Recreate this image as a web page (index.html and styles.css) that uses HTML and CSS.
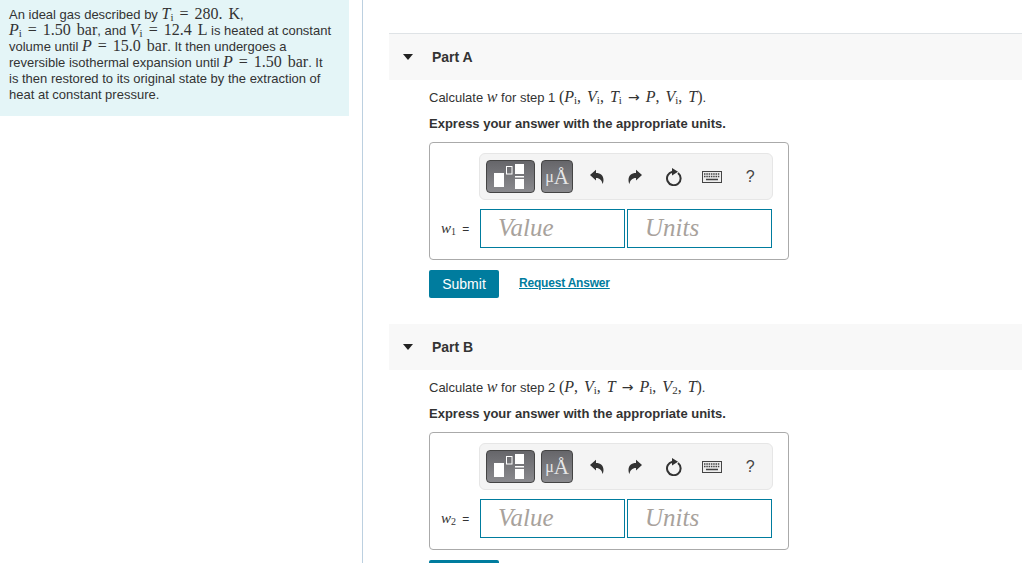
FILE: index.html
```html
<!DOCTYPE html>
<html lang="en">
<head>
    <meta charset="UTF-8">
    <meta name="viewport" content="width=device-width, initial-scale=1.0">
    <title>Ideal gas cycle</title>
    <link rel="stylesheet" href="styles.css">
</head>
<body>
    <div class="layout">
        <div class="intro-pane">
            <div class="intro">
                An ideal gas described by <span class="m"><i>T</i><sub>i</sub> = 280. K</span>,<br>
                <span class="m"><i>P</i><sub>i</sub> = 1.50 bar</span>, and <span class="m"><i>V</i><sub>i</sub> = 12.4 L</span> is heated at constant<br>
                volume until <span class="m"><i>P</i> = 15.0 bar</span>. It then undergoes a<br>
                reversible isothermal expansion until <span class="m"><i>P</i> = 1.50 bar</span>. It<br>
                is then restored to its original state by the extraction of<br>
                heat at constant pressure.
            </div>
        </div>

        <div class="parts">
            <div class="part">
                <div class="part-header part-header-first">
                    <span class="caret"></span>
                    <span class="part-title">Part A</span>
                </div>
                <div class="part-body">
                    <p class="question">Calculate <span class="m"><i>w</i></span> for step 1 <span class="m">(<i>P</i><sub>i</sub>, <i>V</i><sub>i</sub>, <i>T</i><sub>i</sub> <span class="arrow">→</span> <i>P</i>, <i>V</i><sub>i</sub>, <i>T</i>)</span>.</p>
                    <p class="instruction">Express your answer with the appropriate units.</p>
                    <div class="answer-box">
                        <div class="toolbar">
                            <button class="tool-btn tool-frac" aria-label="Templates">
                                <svg width="47" height="31" viewBox="0 0 47 31"><rect x="7" y="12" width="10" height="14" fill="#fff"/><rect x="19.500" y="5.500" width="5.500" height="7.500" fill="none" stroke="#fff"/><rect x="28" y="3" width="9" height="10" fill="#fff"/><rect x="28" y="15" width="9" height="1.500" fill="#fff"/><rect x="28" y="18" width="9" height="10" fill="#fff"/></svg>
                            </button>
                            <button class="tool-btn tool-units"><span class="mu">μ</span>Å</button>
                            <span class="tool-icon">
                                <svg width="16" height="16" viewBox="0 0 16 16"><path d="M1 6 7 .8V4c4.500 0 7.500 2.500 7.500 7 0 1.500-.4 3-1 4C13 11.500 10.800 9 7 9v2.500z" fill="#333"/></svg>
                            </span>
                            <span class="tool-icon">
                                <svg width="16" height="16" viewBox="0 0 16 16"><path d="M15 6 9 .8V4C4.500 4 1.500 6.500 1.500 11c0 1.500.4 3 1 4C3 11.500 5.200 9 9 9v2.500z" fill="#333"/></svg>
                            </span>
                            <span class="tool-icon">
                                <svg width="18" height="18" viewBox="0 0 18 18"><path d="M13 5a6.800 6.800 0 1 1-5.500-1.300" fill="none" stroke="#333" stroke-width="2"/><path d="M7 0l6 3.800L7 7.500z" fill="#333"/></svg>
                            </span>
                            <span class="tool-icon">
                                <svg width="20" height="12" viewBox="0 0 20 12"><rect x=".5" y=".5" width="19" height="11" fill="#eee" stroke="#444"/><path d="M2 3h16M2 5.500h16" stroke="#444" stroke-width="1.500" stroke-dasharray="1.500 .8"/><path d="M4 8.500h12" stroke="#444" stroke-width="1.500"/></svg>
                            </span>
                            <span class="tool-icon tool-help">?</span>
                        </div>
                        <div class="answer-row">
                            <label class="answer-label"><span class="m"><i>w</i><sub>1</sub></span> =</label>
                            <div class="fake-input">Value</div>
                            <div class="fake-input">Units</div>
                        </div>
                    </div>
                    <div class="actions">
                        <button class="submit">Submit</button>
                        <a class="request" href="#">Request Answer</a>
                    </div>
                </div>
            </div>

            <div class="part">
                <div class="part-header">
                    <span class="caret"></span>
                    <span class="part-title">Part B</span>
                </div>
                <div class="part-body">
                    <p class="question">Calculate <span class="m"><i>w</i></span> for step 2 <span class="m">(<i>P</i>, <i>V</i><sub>i</sub>, <i>T</i> <span class="arrow">→</span> <i>P</i><sub>i</sub>, <i>V</i><sub>2</sub>, <i>T</i>)</span>.</p>
                    <p class="instruction">Express your answer with the appropriate units.</p>
                    <div class="answer-box">
                        <div class="toolbar">
                            <button class="tool-btn tool-frac" aria-label="Templates">
                                <svg width="47" height="31" viewBox="0 0 47 31"><rect x="7" y="12" width="10" height="14" fill="#fff"/><rect x="19.500" y="5.500" width="5.500" height="7.500" fill="none" stroke="#fff"/><rect x="28" y="3" width="9" height="10" fill="#fff"/><rect x="28" y="15" width="9" height="1.500" fill="#fff"/><rect x="28" y="18" width="9" height="10" fill="#fff"/></svg>
                            </button>
                            <button class="tool-btn tool-units"><span class="mu">μ</span>Å</button>
                            <span class="tool-icon">
                                <svg width="16" height="16" viewBox="0 0 16 16"><path d="M1 6 7 .8V4c4.500 0 7.500 2.500 7.500 7 0 1.500-.4 3-1 4C13 11.500 10.800 9 7 9v2.500z" fill="#333"/></svg>
                            </span>
                            <span class="tool-icon">
                                <svg width="16" height="16" viewBox="0 0 16 16"><path d="M15 6 9 .8V4C4.500 4 1.500 6.500 1.500 11c0 1.500.4 3 1 4C3 11.500 5.200 9 9 9v2.500z" fill="#333"/></svg>
                            </span>
                            <span class="tool-icon">
                                <svg width="18" height="18" viewBox="0 0 18 18"><path d="M13 5a6.800 6.800 0 1 1-5.500-1.300" fill="none" stroke="#333" stroke-width="2"/><path d="M7 0l6 3.800L7 7.500z" fill="#333"/></svg>
                            </span>
                            <span class="tool-icon">
                                <svg width="20" height="12" viewBox="0 0 20 12"><rect x=".5" y=".5" width="19" height="11" fill="#eee" stroke="#444"/><path d="M2 3h16M2 5.500h16" stroke="#444" stroke-width="1.500" stroke-dasharray="1.500 .8"/><path d="M4 8.500h12" stroke="#444" stroke-width="1.500"/></svg>
                            </span>
                            <span class="tool-icon tool-help">?</span>
                        </div>
                        <div class="answer-row">
                            <label class="answer-label"><span class="m"><i>w</i><sub>2</sub></span> =</label>
                            <div class="fake-input">Value</div>
                            <div class="fake-input">Units</div>
                        </div>
                    </div>
                    <div class="actions">
                        <button class="submit">Submit</button>
                        <a class="request" href="#">Request Answer</a>
                    </div>
                </div>
            </div>
        </div>
    </div>
</body>
</html>
```

FILE: styles.css
```css
html, body {
    margin: 0;
    height: 100%;
    overflow: hidden;
}
body {
    font-family: "Liberation Sans", Arial, sans-serif;
    font-size: 13px;
    color: #333;
    background: white;
}
.layout {
    display: flex;
    height: 563px;
}
.intro-pane {
    flex: none;
    width: 362px;
    border-right: 1px solid #bcd0e0;
}
.intro {
    width: 349px;
    height: 116px;
    box-sizing: border-box;
    padding: 7px 9px 0;
    background: #e4f5f7;
    line-height: 16px;
}
.m {
    font-family: "Liberation Serif", "DejaVu Serif", serif;
    font-size: 16px;
    line-height: 0;
    word-spacing: 2px;
}
.m sub {
    font-size: 11px;
    line-height: 0;
    vertical-align: -2px;
}
.arrow {
    font-family: "DejaVu Sans", sans-serif;
    font-size: 14px;
}
.parts {
    flex: 1;
    padding: 33px 0 0 26px;
    min-width: 0;
}
.part {
    height: 290px;
}
.part-header {
    display: flex;
    align-items: center;
    height: 46px;
    background: #f8f8f8;
    background-clip: padding-box;
    border-top: 1px solid transparent;
}
.part-header-first {
    border-top-color: #dfe3e6;
}
.caret {
    width: 0;
    height: 0;
    margin-left: 14px;
    border-left: 5px solid transparent;
    border-right: 5px solid transparent;
    border-top: 6px solid #222;
}
.part-title {
    margin-left: 19px;
    font-size: 14px;
    font-weight: bold;
}
.part-body {
    padding: 9px 0 0 40px;
}
.question {
    margin: 0;
    line-height: 18px;
}
.instruction {
    margin: 8px 0 9px;
    font-weight: bold;
    line-height: 18px;
}
.answer-box {
    width: 358px;
    height: 116px;
    border: 1px solid #aaa;
    border-radius: 4px;
}
.toolbar {
    display: flex;
    align-items: center;
    width: 294px;
    height: 47px;
    margin: 10px 0 0 49px;
    box-sizing: border-box;
    padding-left: 6px;
    background: #f4f4f4;
    border: 1px solid #e6e6e6;
    border-radius: 6px;
}
.tool-btn {
    height: 33px;
    padding: 0;
    display: flex;
    align-items: center;
    justify-content: center;
    border: 1px solid #444;
    border-radius: 4px;
    background: linear-gradient(#66666a, #8a8a8e);
    color: #e6e6e6;
}
.tool-frac {
    width: 49px;
    margin-right: 6px;
}
.tool-units {
    width: 32px;
    margin-right: 5px;
    align-items: flex-end;
    padding-bottom: 5px;
    font-family: "Liberation Serif", serif;
    font-size: 21px;
    line-height: 20px;
}
.mu {
    font-size: 16px;
}
.tool-icon {
    flex: none;
    display: flex;
    align-items: center;
    justify-content: center;
    width: 38.25px;
    color: #444;
}
.tool-help {
    font-size: 16px;
}
.answer-row {
    display: flex;
    align-items: center;
    margin-top: 9px;
}
.answer-label {
    width: 50px;
    box-sizing: border-box;
    padding-left: 11px;
    font-size: 12px;
    word-spacing: 3px;
}
.answer-label .m {
    font-size: 15px;
    word-spacing: 0;
}
.answer-label .m sub {
    font-size: 10px;
}
.fake-input {
    width: 145px;
    height: 39px;
    box-sizing: border-box;
    margin-right: 2px;
    padding-left: 17px;
    border: 1px solid #007c9e;
    font-family: "Liberation Serif", serif;
    font-style: italic;
    font-size: 25px;
    line-height: 36px;
    color: #a8a29c;
}
.actions {
    display: flex;
    align-items: center;
    margin-top: 10px;
}
.submit {
    width: 70px;
    height: 28px;
    padding: 0;
    border: none;
    border-radius: 2px;
    background: #007c9e;
    color: white;
    font-family: inherit;
    font-size: 14px;
}
.request {
    margin-left: 20px;
    position: relative;
    top: -1px;
    font-size: 12px;
    font-weight: bold;
    letter-spacing: -.2px;
    color: #007c9e;
}
```
